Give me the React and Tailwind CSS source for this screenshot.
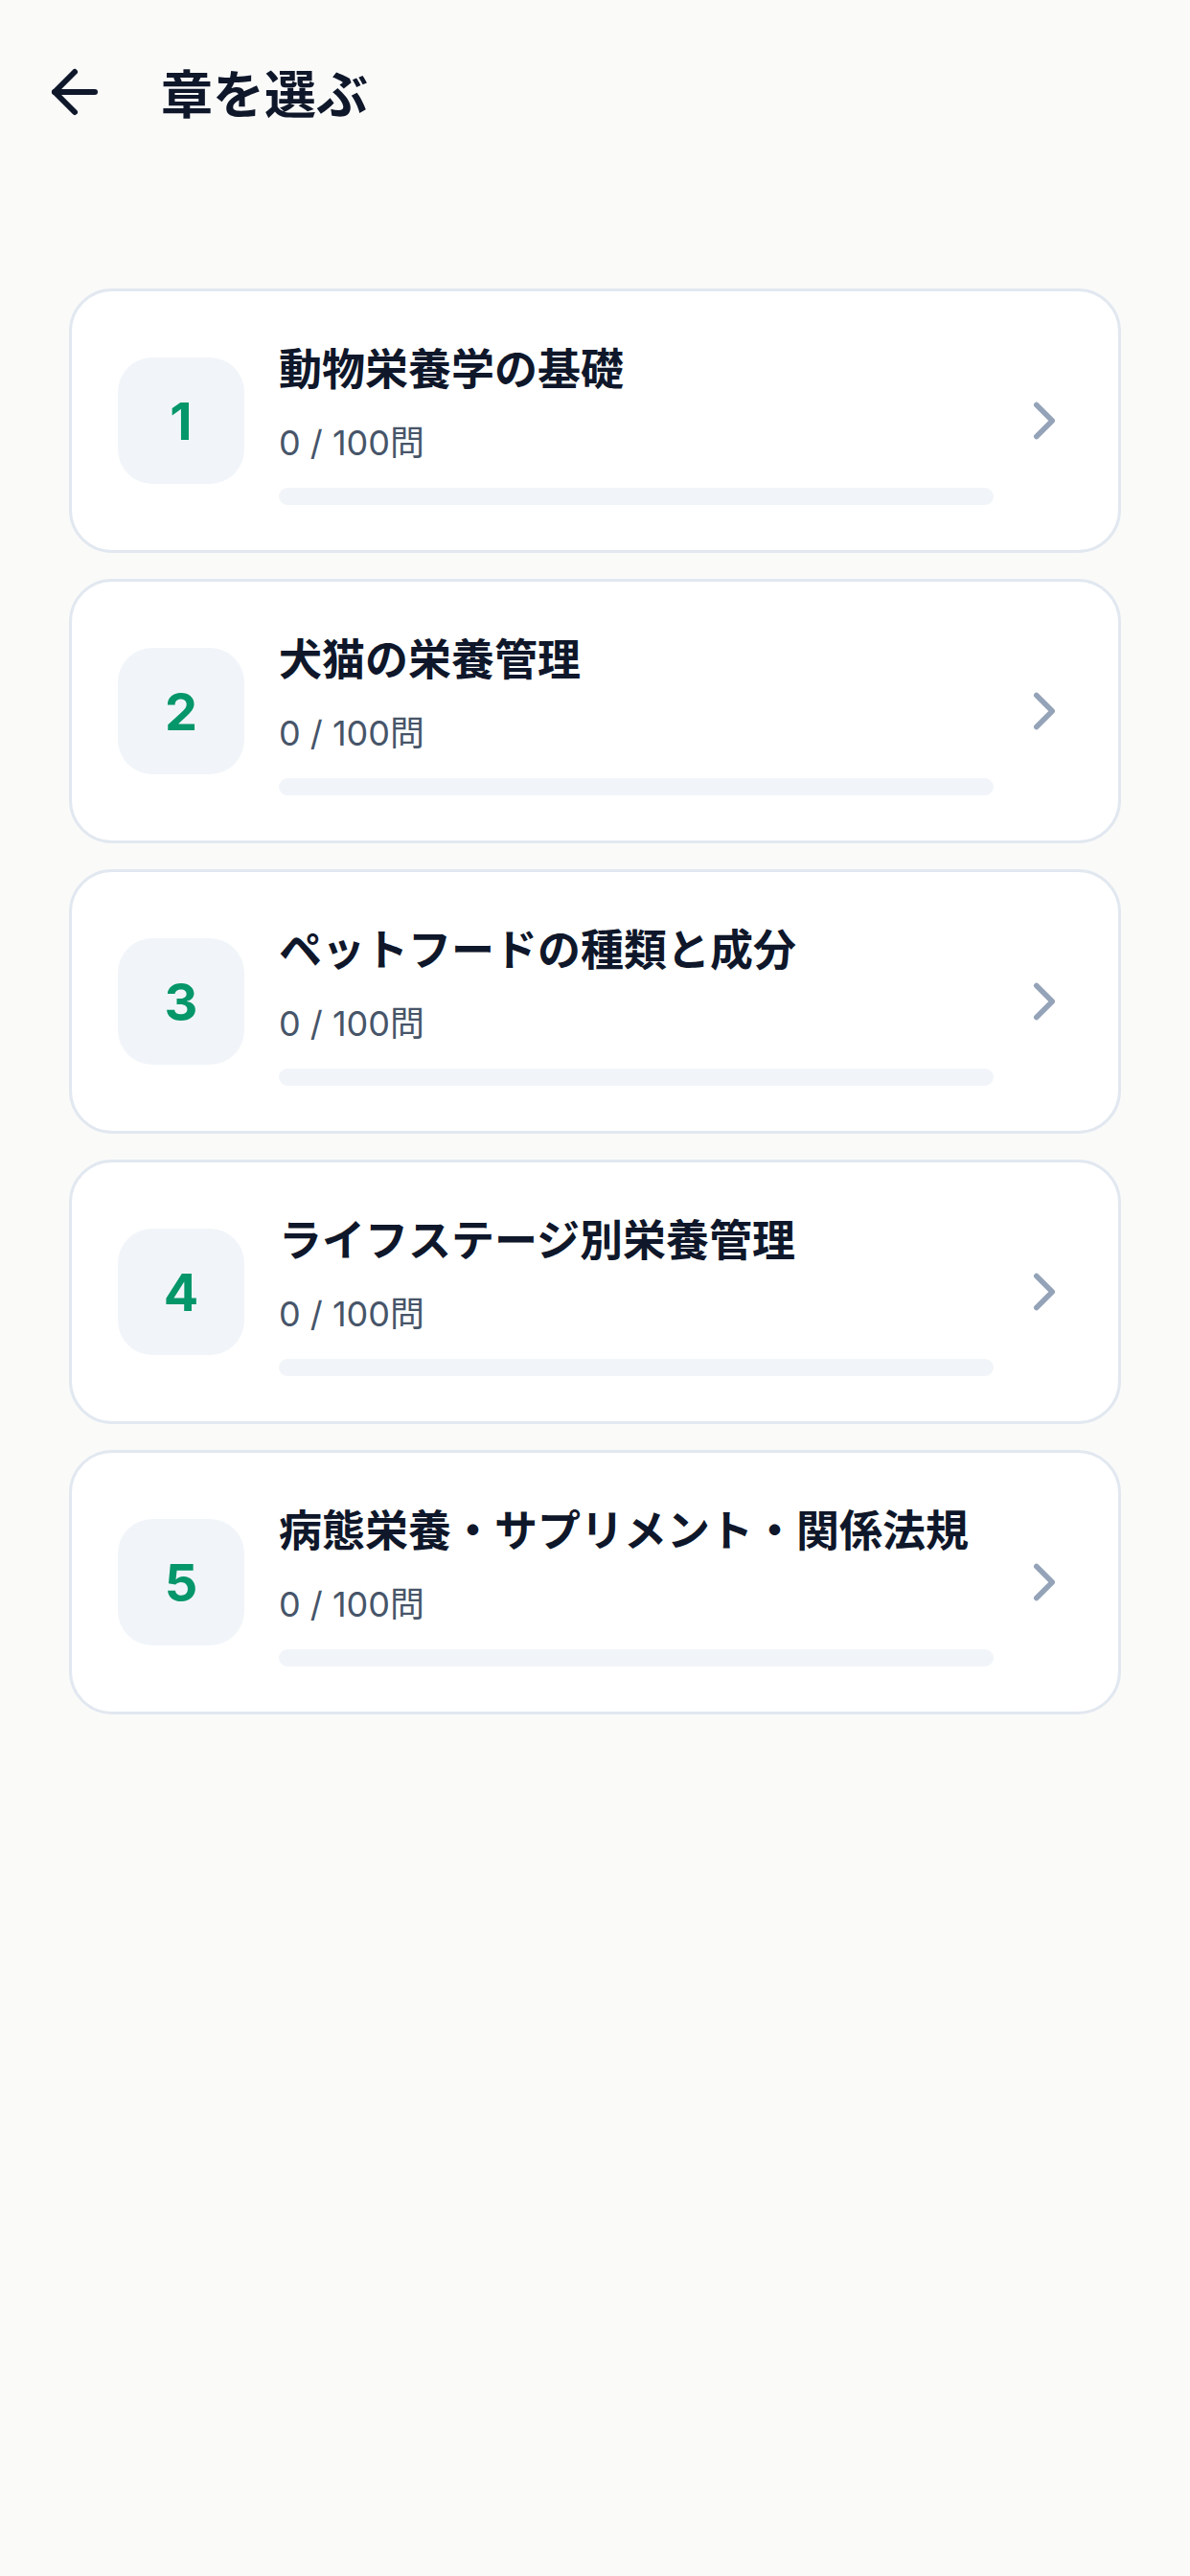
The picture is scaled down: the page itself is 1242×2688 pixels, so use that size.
import React from 'react';
import { ArrowLeft, ChevronRight } from 'lucide-react';

const chapters = [
  { id: 1, title: '動物栄養学の基礎', done: 0, total: 100 },
  { id: 2, title: '犬猫の栄養管理', done: 0, total: 100 },
  { id: 3, title: 'ペットフードの種類と成分', done: 0, total: 100 },
  { id: 4, title: 'ライフステージ別栄養管理', done: 0, total: 100 },
  { id: 5, title: '病態栄養・サプリメント・関係法規', done: 0, total: 100 },
];

function ChapterCard({ chapter }) {
  const pct = chapter.total ? (chapter.done / chapter.total) * 100 : 0;
  return (
    <button
      type="button"
      className="flex w-full items-center rounded-[45px] border-[3px] border-[#e2e8f0] bg-white py-[47px] pl-[48px] pr-[44px] text-left"
    >
      <div className="flex h-[132px] w-[132px] shrink-0 items-center justify-center rounded-[36px] bg-[#f1f5f9]">
        <span className="font-['Inter',sans-serif] text-[54px] font-bold text-[#059669]">{chapter.id}</span>
      </div>
      <div className="ml-[36px] mr-[20px] min-w-0 flex-1">
        <h3 className="font-['Noto_Sans_CJK_JP',sans-serif] text-[45px] font-bold leading-[64px] text-[#0f172a]">
          {chapter.title}
        </h3>
        <p className="mt-[20px] font-['Inter','Noto_Sans_CJK_JP',sans-serif] text-[36px] leading-[54px] text-[#475569]">
          {chapter.done} / {chapter.total}問
        </p>
        <div className="mt-[20px] h-[18px] w-full overflow-hidden rounded-full bg-[#f1f5f9]">
          <div className="h-full rounded-full bg-[#059669]" style={{ width: `${pct}%` }} />
        </div>
      </div>
      <ChevronRight size={66} strokeWidth={2} className="shrink-0 text-[#94a3b8]" />
    </button>
  );
}

export default function App() {
  return (
    <div className="min-h-[2688px] w-full bg-[#fafaf9]">
      <header className="flex items-center pl-[42px] pt-[60px]">
        <button type="button" className="flex h-[72px] w-[72px] items-center justify-center">
          <ArrowLeft size={72} strokeWidth={2} className="text-[#0f172a]" />
        </button>
        <h1 className="ml-[54px] font-['Noto_Sans_CJK_JP',sans-serif] text-[54px] font-bold leading-[72px] text-[#0f172a]">
          章を選ぶ
        </h1>
      </header>

      <div className="mt-[169px] flex flex-col gap-[27px] px-[72px]">
        {chapters.map(ch => (
          <ChapterCard key={ch.id} chapter={ch} />
        ))}
      </div>
    </div>
  );
}
